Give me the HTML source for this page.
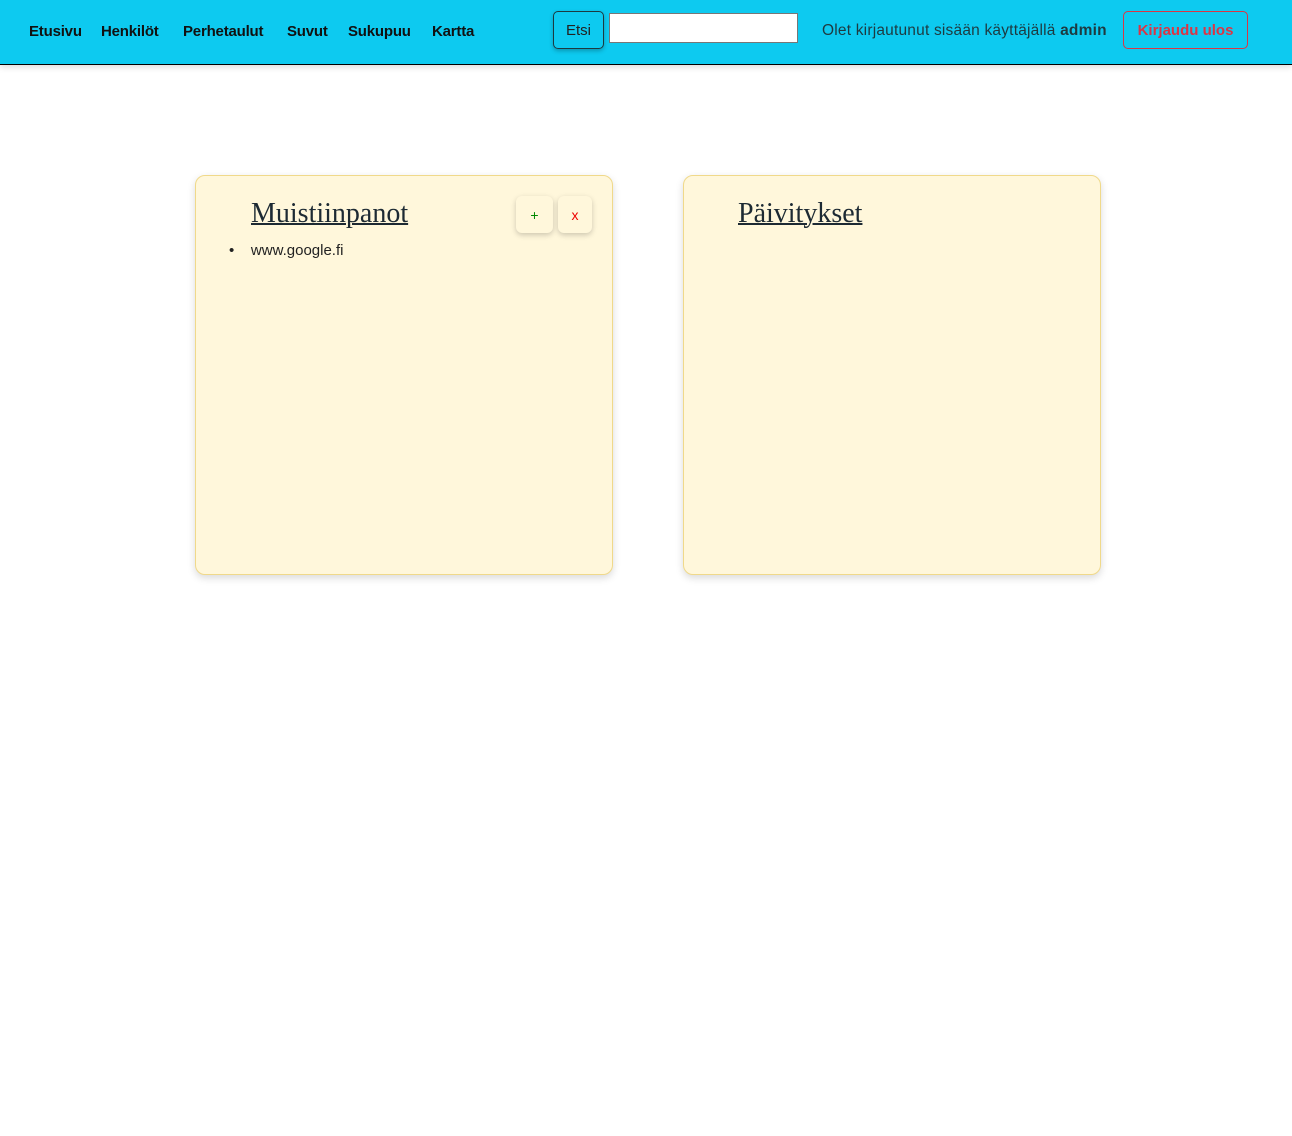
<!DOCTYPE html>
<html><head><meta charset="utf-8"><style>
body{margin:0;background:#fff;font-family:"Liberation Sans",sans-serif;width:1292px;height:1136px;position:relative;overflow:hidden}
.nav{position:absolute;left:0;top:0;width:1292px;height:64px;background:#0dcaf0;border-bottom:1px solid #000;box-shadow:0 2px 6px rgba(0,0,0,.15)}
.nav a{position:absolute;top:23px;font-size:15px;font-weight:bold;color:#111;text-decoration:none;letter-spacing:-0.2px}
.etsi{position:absolute;left:553px;top:11px;width:51px;height:38px;border:1px solid #1c3a40;border-radius:5px;box-sizing:border-box;font-size:15px;color:#222;text-align:center;line-height:38px;box-shadow:0 2px 4px rgba(0,0,0,.25)}
.inp{position:absolute;left:609px;top:13px;width:189px;height:30px;background:#fff;border:1px solid #777;box-sizing:border-box}
.who{position:absolute;left:822px;top:22px;font-size:15.5px;color:#1e3a40;letter-spacing:0.2px}
.out{position:absolute;left:1123px;top:11px;width:125px;height:38px;border:1px solid #dc3545;border-radius:5px;box-sizing:border-box;color:#dc3545;font-weight:bold;font-size:15px;text-align:center;line-height:38px}
.card{position:absolute;top:175px;width:418px;height:400px;background:#fff7db;border:1px solid #f0d98a;border-radius:10px;box-sizing:border-box;box-shadow:0 3px 8px rgba(0,0,0,.15)}
.card h2{position:absolute;top:22px;margin:0;font-family:"Liberation Serif",serif;font-weight:normal;font-size:28px;color:#1d2a33;text-decoration:underline;text-decoration-thickness:2px}
.b{position:absolute;top:20px;height:37px;background:#fff7db;border-radius:6px;box-shadow:0 2px 6px rgba(0,0,0,.2);text-align:center;line-height:38px;font-size:14px}
</style></head><body>
<div class="nav">
<a style="left:29px">Etusivu</a><a style="left:101px">Henkilöt</a><a style="left:183px">Perhetaulut</a><a style="left:287px">Suvut</a><a style="left:348px">Sukupuu</a><a style="left:432px">Kartta</a>
<div class="etsi">Etsi</div><div class="inp"></div>
<div class="who">Olet kirjautunut sisään käyttäjällä <b>admin</b></div>
<div class="out">Kirjaudu ulos</div>
</div>
<div class="card" style="left:195px">
<h2 style="left:55px">Muistiinpanot</h2>
<div class="b" style="left:320px;width:37px;color:#080">+</div>
<div class="b" style="left:362px;width:34px;color:#e00">x</div>
<div style="position:absolute;left:33px;top:66px;font-size:15px;color:#222">•&nbsp;&nbsp;&nbsp; www.google.fi</div>
</div>
<div class="card" style="left:683px">
<h2 style="left:54px">Päivitykset</h2>
</div>
</body></html>
